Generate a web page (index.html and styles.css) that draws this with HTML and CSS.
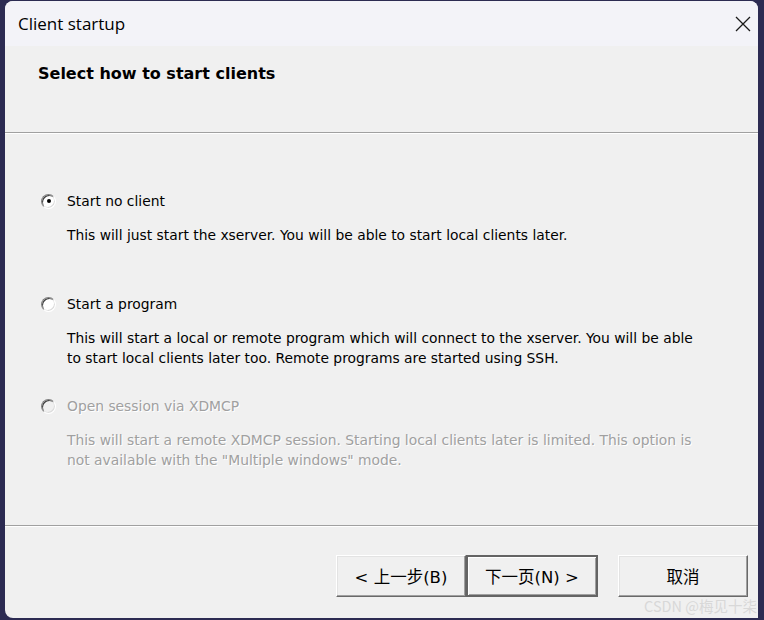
FILE: index.html
```html
<!DOCTYPE html>
<html lang="en">
<head>
  <meta charset="UTF-8" />
  <title>Client startup</title>
  <link rel="stylesheet" href="styles.css">
</head>
<body>
  <div class="window">
    <div class="titlebar">
      <span class="title">Client startup</span>
      <svg class="close" width="16" height="16" viewBox="0 0 16 16">
        <path d="M1 1 L15 15 M15 1 L1 15" stroke="#1a1a1a" stroke-width="1.3" fill="none" />
      </svg>
    </div>

    <div class="header">
      <h1 class="heading">Select how to start clients</h1>
    </div>
    <div class="sep"></div>

    <div class="content">
      <div class="option">
        <div class="radio-row">
          <span class="radio checked"></span>
          <span class="label">Start no client</span>
        </div>
        <p class="desc">This will just start the xserver. You will be able to start local clients later.</p>
      </div>

      <div class="option">
        <div class="radio-row">
          <span class="radio"></span>
          <span class="label">Start a program</span>
        </div>
        <p class="desc">This will start a local or remote program which will connect to the xserver. You will be able<br>to start local clients later too. Remote programs are started using SSH.</p>
      </div>

      <div class="option disabled">
        <div class="radio-row">
          <span class="radio"></span>
          <span class="label">Open session via XDMCP</span>
        </div>
        <p class="desc">This will start a remote XDMCP session. Starting local clients later is limited. This option is<br>not available with the "Multiple windows" mode.</p>
      </div>
    </div>

    <div class="sep"></div>

    <div class="footer">
      <div class="nav">
        <button class="btn">&lt; 上一步(B)</button>
        <button class="btn default">下一页(N) &gt;</button>
      </div>
      <button class="btn">取消</button>
    </div>
  </div>
  <div class="watermark">CSDN @梅见十柒</div>
</body>
</html>
```

FILE: styles.css
```css
* {
  margin: 0;
  padding: 0;
  box-sizing: border-box;
}

body {
  background-color: #2c2b52;
  font-family: 'DejaVu Sans', Tahoma, sans-serif;
  width: 764px;
  height: 620px;
  overflow: hidden;
  position: relative;
}

.window {
  margin: 1px 6px 0 5px;
  height: 617px;
  background-color: #f0f0f0;
  border-radius: 8px 8px 0 8px;
  overflow: hidden;
  display: flex;
  flex-direction: column;
}

.titlebar {
  height: 45px;
  flex-shrink: 0;
  background-color: #f3f3f8;
  display: flex;
  align-items: center;
  justify-content: space-between;
  padding: 0 7px 0 13px;
}

.title {
  font-family: 'Open Sans', 'Noto Sans', sans-serif;
  font-size: 17px;
  color: #000;
}

.close {
  display: block;
}

.header {
  height: 86px;
  flex-shrink: 0;
  padding: 18px 0 0 33px;
}

.heading {
  font-size: 16px;
  font-weight: bold;
  color: #000;
}

.sep {
  height: 2px;
  flex-shrink: 0;
  border-top: 1px solid #a0a0a0;
  border-bottom: 1px solid #ffffff;
}

.content {
  height: 391px;
  flex-shrink: 0;
  padding: 57px 0 0 36px;
  display: flex;
  flex-direction: column;
  gap: 28px;
}

.radio-row {
  display: flex;
  align-items: center;
  height: 20px;
}

.radio {
  width: 15px;
  height: 15px;
  border-radius: 50%;
  border: 1px solid;
  border-color: #808080 #ffffff #ffffff #808080;
  box-shadow: inset 1px 1px 0 #404040, inset -1px -1px 0 #dcdcdc;
  background-color: #ffffff;
  position: relative;
  margin-right: 11px;
}

.radio.checked::after {
  content: '';
  position: absolute;
  left: 4.5px;
  top: 4.5px;
  width: 4px;
  height: 4px;
  border-radius: 50%;
  background-color: #000;
}

.label,
.desc {
  font-size: 13.85px;
  color: #000;
}

.desc {
  margin: 14px 0 0 26px;
  line-height: 20px;
  min-height: 40px;
}

.option + .option {
  margin-top: 1px;
}

.option.disabled {
  margin-top: 0;
}

.disabled .label,
.disabled .desc {
  color: #a0a0a0;
  text-shadow: 1px 1px 0 #ffffff;
}

.disabled .radio {
  background-color: #f0f0f0;
}

.footer {
  flex: 1;
  display: flex;
  align-items: flex-start;
  padding: 28px 0 0 331px;
  gap: 20px;
}

.nav {
  display: flex;
}

.btn {
  width: 130px;
  height: 42px;
  font-family: 'DejaVu Sans', 'Noto Sans CJK SC', sans-serif;
  font-size: 16.5px;
  color: #000;
  background-color: #f0f0f0;
  border: 1px solid;
  border-color: #ffffff #696969 #696969 #ffffff;
  box-shadow: inset -1px -1px 0 #a0a0a0, inset 1px 1px 0 #e3e3e3;
}

.btn.default {
  width: 132px;
  border: 2px solid #646464;
  box-shadow: inset 1px 1px 0 #ffffff, inset -1px -1px 0 #a0a0a0;
}

.watermark {
  position: absolute;
  right: 7px;
  bottom: 4px;
  font-family: 'Noto Sans CJK SC', sans-serif;
  font-size: 14.5px;
  color: #d8d8d8;
}
```
